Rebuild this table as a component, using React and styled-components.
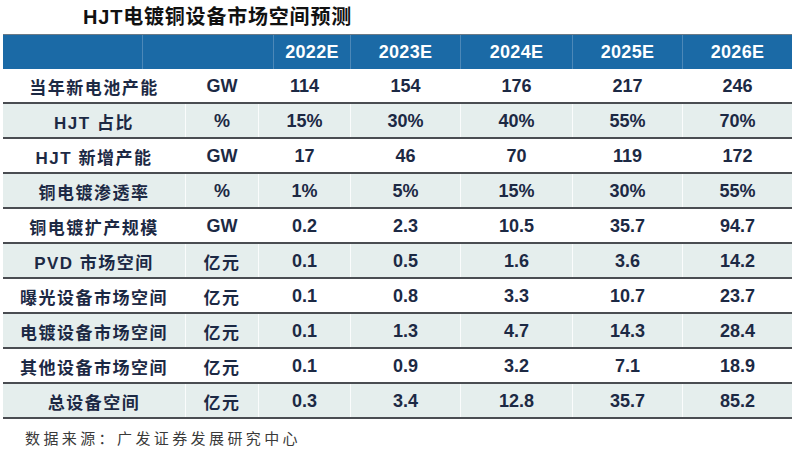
import styled, { createGlobalStyle } from "styled-components";

const GlobalStyle = createGlobalStyle`
  html, body {
    margin: 0;
    padding: 0;
    background: #ffffff;
  }
  body {
    font-family: "Liberation Sans", "Noto Sans CJK SC", sans-serif;
  }
`;

const Page = styled.div`
  width: 801px;
  height: 454px;
  box-sizing: border-box;
  padding: 0 9px 0 3px;
  display: flex;
  flex-direction: column;
`;

const Title = styled.div`
  height: 34px;
  line-height: 34px;
  padding-left: 80px;
  font-size: 20px;
  font-weight: 700;
  letter-spacing: 0.8px;
  color: #111;
  font-family: "Liberation Sans", "Noto Sans CJK SC", sans-serif;
`;

const HeaderRow = styled.div`
  display: grid;
  grid-template-columns: 139px 131px 77px 110px 112px 110px 110px;
  height: 35px;
  box-sizing: border-box;
  border-top: 1px solid #6b7a86;
  background: #1b6aa6;
`;

const HeadCell = styled.div`
  display: flex;
  align-items: center;
  justify-content: center;
  color: #ffffff;
  font-family: "Liberation Sans", Arial, sans-serif;
  font-size: 18px;
  font-weight: 700;
  letter-spacing: 0.3px;
  border-left: ${(p) => (p.$first ? "none" : "1px solid #4c88b8")};
`;

const Row = styled.div`
  display: grid;
  grid-template-columns: 182px 73px 92px 110px 112px 110px 110px;
  height: 35px;
  box-sizing: border-box;
  border-bottom: 2px solid #4a4d52;
  background: ${(p) => (p.$shaded ? "#e5eeed" : "#ffffff")};
`;

const Cell = styled.div`
  display: flex;
  align-items: center;
  justify-content: center;
  color: #1c2944;
  font-family: "Liberation Sans", "Noto Sans CJK SC", sans-serif;
  font-size: 18px;
  font-weight: 700;
  padding-top: 1px;
  border-left: ${(p) => (p.$first ? "none" : "1px solid rgba(255,255,255,0.8)")};
`;

const Label = styled(Cell)`
  font-size: 17px;
  letter-spacing: 1.5px;
`;

const Unit = styled(Cell)`
  font-size: ${(p) => (p.$cjk ? "17px" : "18px")};
  letter-spacing: ${(p) => (p.$cjk ? "1.5px" : "0")};
`;

const Source = styled.div`
  padding: 8px 0 0 22px;
  font-size: 15px;
  line-height: 22px;
  letter-spacing: 3.4px;
  color: #3a3a3a;
  font-family: "Noto Sans CJK SC", sans-serif;
`;

const years = ["2022E", "2023E", "2024E", "2025E", "2026E"];

const rows = [
  ["当年新电池产能", "GW", ["114", "154", "176", "217", "246"]],
  ["HJT 占比", "%", ["15%", "30%", "40%", "55%", "70%"]],
  ["HJT 新增产能", "GW", ["17", "46", "70", "119", "172"]],
  ["铜电镀渗透率", "%", ["1%", "5%", "15%", "30%", "55%"]],
  ["铜电镀扩产规模", "GW", ["0.2", "2.3", "10.5", "35.7", "94.7"]],
  ["PVD 市场空间", "亿元", ["0.1", "0.5", "1.6", "3.6", "14.2"]],
  ["曝光设备市场空间", "亿元", ["0.1", "0.8", "3.3", "10.7", "23.7"]],
  ["电镀设备市场空间", "亿元", ["0.1", "1.3", "4.7", "14.3", "28.4"]],
  ["其他设备市场空间", "亿元", ["0.1", "0.9", "3.2", "7.1", "18.9"]],
  ["总设备空间", "亿元", ["0.3", "3.4", "12.8", "35.7", "85.2"]],
];

export default function App() {
  return (
    <>
      <GlobalStyle />
      <Page>
        <Title>HJT电镀铜设备市场空间预测</Title>
        <HeaderRow>
          <HeadCell $first />
          <HeadCell />
          {years.map((y) => (
            <HeadCell key={y}>{y}</HeadCell>
          ))}
        </HeaderRow>
        {rows.map(([label, unit, values], i) => (
          <Row key={label} $shaded={i % 2 === 1}>
            <Label $first>{label}</Label>
            <Unit $cjk={unit === "亿元"}>{unit}</Unit>
            {values.map((v, j) => (
              <Cell key={j}>{v}</Cell>
            ))}
          </Row>
        ))}
        <Source>数据来源：广发证券发展研究中心</Source>
      </Page>
    </>
  );
}
